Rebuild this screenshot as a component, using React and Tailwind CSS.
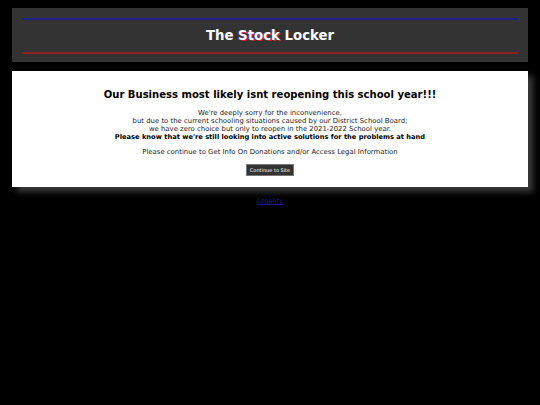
import React from "react";

const App = () => {
  return (
    <div className="min-h-[405px] bg-black pt-[8px] px-[12px] font-['DejaVu_Sans',Verdana,sans-serif]">
      <div className="bg-[#333333] h-[54px] px-[10px] pt-[10px]">
        <div className="h-[2px] bg-[#1f1f8a]"></div>
        <h1 className="h-[32px] flex items-center justify-center text-white font-bold text-[13.3px]">
          The&nbsp;
          <span className="[text-shadow:-1px_0_0_#3b3bd6,1px_1px_0_#c2232b]">Stock</span>
          &nbsp;Locker
        </h1>
        <div className="h-[2px] bg-[#8c1f1f]"></div>
      </div>

      <div className="mt-[9px] bg-white h-[116px] shadow-[5px_5px_6px_#3a3a3a] flex flex-col items-center pt-[17px] text-black">
        <h2 className="font-bold text-[10.05px] leading-[14px]">
          Our Business most likely isnt reopening this school year!!!
        </h2>
        <div className="mt-[7px] text-[6.9px] leading-[8px] text-center text-[#222]">
          <p>We're deeply sorry for the inconvenience,</p>
          <p>but due to the current schooling situations caused by our District School Board;</p>
          <p>we have zero choice but only to reopen in the 2021-2022 School year.</p>
          <p className="font-bold text-black text-[6.7px]">
            Please know that we're still looking into active solutions for the problems at hand
          </p>
          <p className="mt-[7px]">Please continue to Get Info On Donations and/or Access Legal Information</p>
        </div>
        <button className="mt-[8px] h-[12px] px-[3px] bg-[#333333] border border-[#777] text-white text-[5px] leading-none">
          Continue to Site
        </button>
      </div>

      <div className="mt-[10px] text-center text-[6.5px]">
        <a href="#" className="text-[#1a1a9e] underline">Legality</a>
      </div>
    </div>
  );
};

export default App;
